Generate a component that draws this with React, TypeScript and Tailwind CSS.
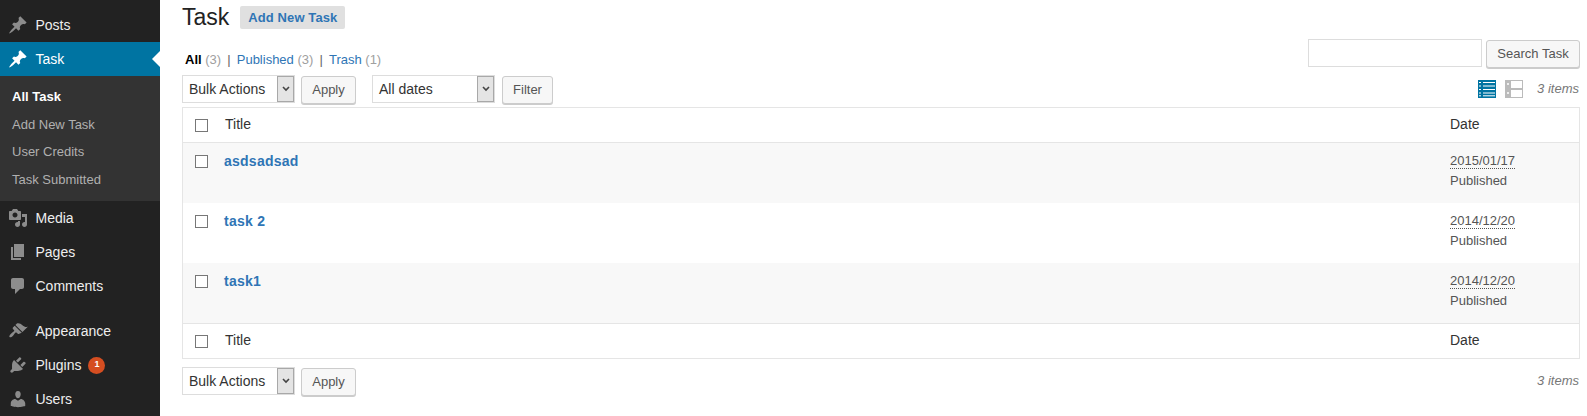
import React from "react";

const FONT = "font-['Liberation_Sans',Arial,sans-serif]";

const paths: Record<string, string> = {
  post: "M10.44 3.02l1.82-1.82 6.36 6.35-1.83 1.82c-1.05-.68-2.48-.57-3.41.36l-.75.75c-.92.93-1.04 2.35-.35 3.41l-1.83 1.82-2.41-2.41-2.8 2.79c-.42.42-3.38 2.71-3.8 2.29s1.86-3.39 2.28-3.81l2.79-2.79L4.1 9.36l1.83-1.82c1.05.69 2.48.57 3.4-.36l.75-.75c.93-.92 1.05-2.35.36-3.41z",
  media: "M13 11V4c0-.55-.45-1-1-1h-1.67L9 1H5L3.67 3H2c-.55 0-1 .45-1 1v7c0 .55.45 1 1 1h10c.55 0 1-.45 1-1zM7 4.5c1.38 0 2.5 1.12 2.5 2.5S8.38 9.5 7 9.5 4.5 8.38 4.5 7 5.62 4.5 7 4.5zM14 6h5v10.5c0 1.38-1.12 2.5-2.5 2.5S14 17.88 14 16.5s1.12-2.5 2.5-2.5c.17 0 .34.02.5.05V9h-3V6zm-4 8.05V13h2v3.5c0 1.38-1.12 2.5-2.5 2.5S7 17.88 7 16.5 8.12 14 9.5 14c.17 0 .34.02.5.05z",
  page: "M6 15V2h10v13H6zm-1 1h8v2H3V5h2v11z",
  comments: "M5 2h9c1.1 0 2 .9 2 2v7c0 1.1-.9 2-2 2h-2l-5 5v-5H5c-1.1 0-2-.9-2-2V4c0-1.1.9-2 2-2z",
  appearance: "M14.48 11.06L7.41 3.99l1.5-1.5c.5-.56 2.3-.47 3.51.32 1.21.8 1.43 1.28 2.91 2.1 1.18.64 2.45 1.26 4.45.85zm-.71.71L6.7 4.7 4.93 6.47c-.39.39-.39 1.02 0 1.41l1.06 1.06c.39.39.39 1.03 0 1.42-.6.6-1.43 1.11-2.21 1.69-.35.26-.7.53-1.01.84-.93.93-2 2.4-1.2 3.2s2.27-.27 3.2-1.2c.31-.31.58-.66.84-1.01.58-.78 1.09-1.61 1.69-2.21.39-.39 1.03-.39 1.42 0l1.06 1.06c.39.39 1.02.39 1.41 0z",
  plugins: "M13.11 4.36L9.87 7.6 8 5.73l3.24-3.24c.35-.34 1.05-.2 1.56.32.52.51.66 1.21.31 1.55zm-8 1.77l.91-1.12 9.01 9.01-1.19.84c-.71.71-2.63 1.16-3.82 1.16H6.14L4.9 17.26c-.59.59-1.54.59-2.12 0-.59-.58-.59-1.53 0-2.12l1.24-1.24v-3.88c0-1.13.4-3.19 1.09-3.89zm7.26 3.97l3.24-3.24c.34-.35 1.04-.21 1.55.31.52.51.66 1.21.31 1.55l-3.24 3.25z",
  users: "M10 9.25c-2.27 0-2.73-3.44-2.73-3.44C7 4.02 7.82 2 9.97 2c2.16 0 2.98 2.02 2.71 3.81 0 0-.41 3.44-2.68 3.44zm0 2.57L12.72 10c2.39 0 4.52 2.33 4.52 4.53v2.49s-3.65 1.13-7.24 1.13c-3.65 0-7.24-1.13-7.24-1.13v-2.49c0-2.25 1.94-4.48 4.47-4.48z",
};

function Dash({ name, active }: { name: string; active?: boolean }) {
  return (
    <svg viewBox="0 0 20 20" className={`w-5 h-5 shrink-0 ${active ? "fill-white" : "fill-[#8c8c8c]"}`}>
      <path d={paths[name]} />
    </svg>
  );
}

function MenuItem({ icon, label, children }: { icon: string; label: string; children?: React.ReactNode }) {
  return (
    <div className="h-[34px] flex items-center pl-[8px] text-[14px] text-[#eeeeee]">
      <Dash name={icon} />
      <span className="ml-[7.5px]">{label}</span>
      {children}
    </div>
  );
}

function SubItem({ label, current }: { label: string; current?: boolean }) {
  return (
    <div className={`h-[27.5px] flex items-center pl-[12px] text-[13px] ${current ? "font-bold text-white" : "text-[#b0b0b0]"}`}>
      {label}
    </div>
  );
}

function Button({ label, w }: { label: string; w: string }) {
  return (
    <button className={`${w} h-[28px] shrink-0 mt-[1px] bg-[#f7f7f7] border border-[#cccccc] rounded-[3px] text-[13px] text-[#555555] shadow-[0_1px_0_#cccccc]`}>
      {label}
    </button>
  );
}

function Select({ label, w }: { label: string; w: string }) {
  return (
    <div className={`relative ${w} h-[28px] shrink-0 bg-white border border-[#dddddd] flex items-center pl-[6px] text-[14px] text-[#333333]`}>
      {label}
      <span className="absolute right-0 top-0 bottom-0 w-[17px] bg-[#e4e4e4] border border-[#a8a8a8] flex items-center justify-center">
        <svg viewBox="0 0 8 6" className="w-[8px] h-[6px] fill-none stroke-[#444444] stroke-[1.6]">
          <path d="M1 1l3 3 3-3" />
        </svg>
      </span>
    </div>
  );
}

function Checkbox() {
  return <span className="block w-[13px] h-[13px] bg-white border border-[#777777] shrink-0" />;
}

function HeadRow({ border }: { border: string }) {
  return (
    <div className={`flex items-center ${border} text-[14px] text-[#333333]`}>
      <div className="w-[42px] pl-[12px] pt-[1px]"><Checkbox /></div>
      <div className="flex-1 pb-[2px]">Title</div>
      <div className="w-[129px] pb-[2px]">Date</div>
    </div>
  );
}

function Row({ title, date, stripe }: { title: string; date: string; stripe?: boolean }) {
  return (
    <div className={`flex h-[60px] ${stripe ? "bg-[#f8f8f8]" : "bg-white"}`}>
      <div className="w-[41px] pl-[12px] pt-[12px]"><Checkbox /></div>
      <div className="flex-1 pt-[9px] text-[14px] leading-[18px] font-bold tracking-[0.25px] text-[#2f75b5]">{title}</div>
      <div className="w-[129px] pt-[8px] text-[13px] leading-[20px] text-[#555555]">
        <span className="border-b border-dotted border-[#555555]">{date}</span>
        <div>Published</div>
      </div>
    </div>
  );
}

function Filters() {
  const sep = "text-[#666666] mx-[2.5px]";
  return (
    <div className="pl-[3px] pt-[12px] text-[13px] leading-[18px] text-[#a0a0a0]">
      <b className="text-black">All</b> (3)<span className={sep}> | </span>
      <span className="text-[#2f75b5]">Published</span> (3)<span className={sep}> | </span>
      <span className="text-[#2f75b5]">Trash</span> (1)
    </div>
  );
}

export default function App() {
  return (
    <div className={`${FONT} flex h-[416px] overflow-hidden bg-white`}>
      <aside className="w-[160px] shrink-0 bg-[#222222] pt-[8px]">
        <MenuItem icon="post" label="Posts" />
        <div className="relative h-[34px] flex items-center pl-[8px] bg-[#0074a2] text-[14px] text-white">
          <Dash name="post" active />
          <span className="ml-[7.5px]">Task</span>
          <span className="absolute right-0 top-[9px] border-y-[8px] border-r-[8px] border-y-transparent border-r-white" />
        </div>
        <div className="bg-[#333333] pt-[7px] pb-[8px]">
          <SubItem label="All Task" current />
          <SubItem label="Add New Task" />
          <SubItem label="User Credits" />
          <SubItem label="Task Submitted" />
        </div>
        <MenuItem icon="media" label="Media" />
        <MenuItem icon="page" label="Pages" />
        <MenuItem icon="comments" label="Comments" />
        <div className="h-[11px]" />
        <MenuItem icon="appearance" label="Appearance" />
        <MenuItem icon="plugins" label="Plugins">
          <span className="ml-[7px] w-[17px] h-[17px] rounded-full bg-[#d54e21] text-white text-[9px] font-bold flex items-center justify-center">1</span>
        </MenuItem>
        <MenuItem icon="users" label="Users" />
      </aside>

      <main className="flex-1 pl-[22px] pr-[7px] pt-[6px]">
        <div className="flex items-center h-[23px]">
          <h2 className="text-[23px] leading-[23px] text-[#222222]">Task</h2>
          <span className="ml-[11px] h-[23px] px-[8px] flex items-center bg-[#e0e0e0] rounded-[2px] text-[13px] font-bold tracking-[0.1px] text-[#2f75b5]">Add New Task</span>
        </div>

        <div className="flex justify-between mt-[10px] h-[28px]">
          <Filters />
          <div className="flex gap-[4px]">
            <input aria-label="Search" className="w-[174px] h-[28px] bg-white border border-[#dddddd]" />
            <Button label="Search Task" w="w-[94px]" />
          </div>
        </div>

        <div className="flex items-start mt-[8px] h-[29px]">
          <Select label="Bulk Actions" w="w-[113px]" />
          <span className="ml-[6px]"><Button label="Apply" w="w-[55px]" /></span>
          <span className="ml-[16px]"><Select label="All dates" w="w-[123px]" /></span>
          <span className="ml-[7px]"><Button label="Filter" w="w-[51px]" /></span>
          <div className="ml-auto flex items-center h-[28px]">
            <svg viewBox="0 0 18 18" className="w-[18px] h-[18px]">
              <rect width="18" height="18" fill="#0074a2" />
              <path d="M1 2.5h2M5 2.5h12M1 6h2M5 6h12M1 9.5h2M5 9.5h12M1 13h2M5 13h12M1 15.8h2M5 15.8h12" stroke="#ffffff" strokeWidth="1" />
            </svg>
            <svg viewBox="0 0 18 18" className="w-[18px] h-[18px] ml-[9px]">
              <rect width="18" height="18" fill="#bbbbbb" />
              <path d="M6 1h11v7H6zM6 10h11v7H6z" fill="#ffffff" />
              <path d="M2 3h2v2H2zM2 12h2v2H2z" fill="#eeeeee" />
            </svg>
            <span className="ml-[14px] mr-[1px] text-[13px] italic text-[#777777]">3 items</span>
          </div>
        </div>

        <div className="mt-[3px] border border-[#e5e5e5]">
          <HeadRow border="h-[35px] border-b border-[#e5e5e5]" />
          <Row title="asdsadsad" date="2015/01/17" stripe />
          <Row title="task 2" date="2014/12/20" />
          <Row title="task1" date="2014/12/20" stripe />
          <HeadRow border="h-[35px] border-t border-[#e5e5e5]" />
        </div>

        <div className="flex items-start mt-[8px] h-[29px]">
          <Select label="Bulk Actions" w="w-[113px]" />
          <span className="ml-[6px]"><Button label="Apply" w="w-[55px]" /></span>
          <span className="ml-auto mr-[1px] mt-[4px] text-[13px] italic text-[#777777]">3 items</span>
        </div>
      </main>
    </div>
  );
}
